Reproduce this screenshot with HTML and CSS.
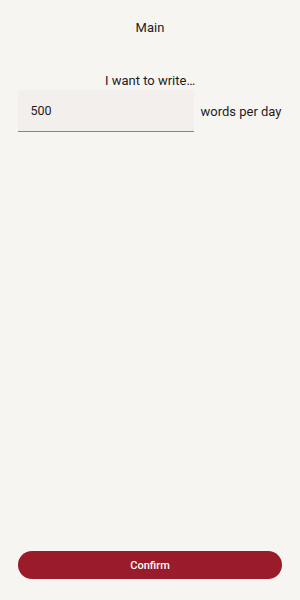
FILE: index.html
```html
<!DOCTYPE html>
<html>
<head>
    <link rel="stylesheet" href="styles.css">
</head>
<body>
    <div class="screen">
        <div class="topbar">Main</div>
        <div class="goal">
            <p class="goal-label">I want to write…</p>
            <div class="goal-row">
                <div class="field">500</div>
                <span class="unit">words per day</span>
            </div>
        </div>
        <div class="bottom">
            <button class="confirm-btn">Confirm</button>
        </div>
    </div>
</body>
</html>
```

FILE: styles.css
```css
* {
    box-sizing: border-box;
}

body {
    margin: 0;
    padding: 0;
    font-family: Roboto, "Liberation Sans", sans-serif;
    background-color: #f7f5f2;
    color: #1f1b1b;
}

.screen {
    height: 600px;
    display: flex;
    flex-direction: column;
}

.topbar {
    height: 54px;
    display: flex;
    align-items: center;
    justify-content: center;
    font-size: 13px;
}

.goal {
    padding-top: 18px;
}

.goal-label {
    margin: 0;
    text-align: center;
    font-size: 13px;
    line-height: 18px;
}

.goal-row {
    display: flex;
    align-items: center;
    justify-content: center;
    gap: 6px;
}

.field {
    width: 176px;
    height: 42px;
    padding-left: 12px;
    display: flex;
    align-items: center;
    background-color: #f2efec;
    border-bottom: 1px solid #8a8585;
    font-size: 12.5px;
}

.unit {
    font-size: 13px;
}

.bottom {
    margin-top: auto;
    padding: 0 18px 21px;
}

.confirm-btn {
    width: 100%;
    height: 28px;
    border: none;
    border-radius: 14px;
    background-color: #9a1c2b;
    color: #fff;
    font-family: Roboto, "Liberation Sans", sans-serif;
    font-size: 11px;
    font-weight: 500;
}
```
